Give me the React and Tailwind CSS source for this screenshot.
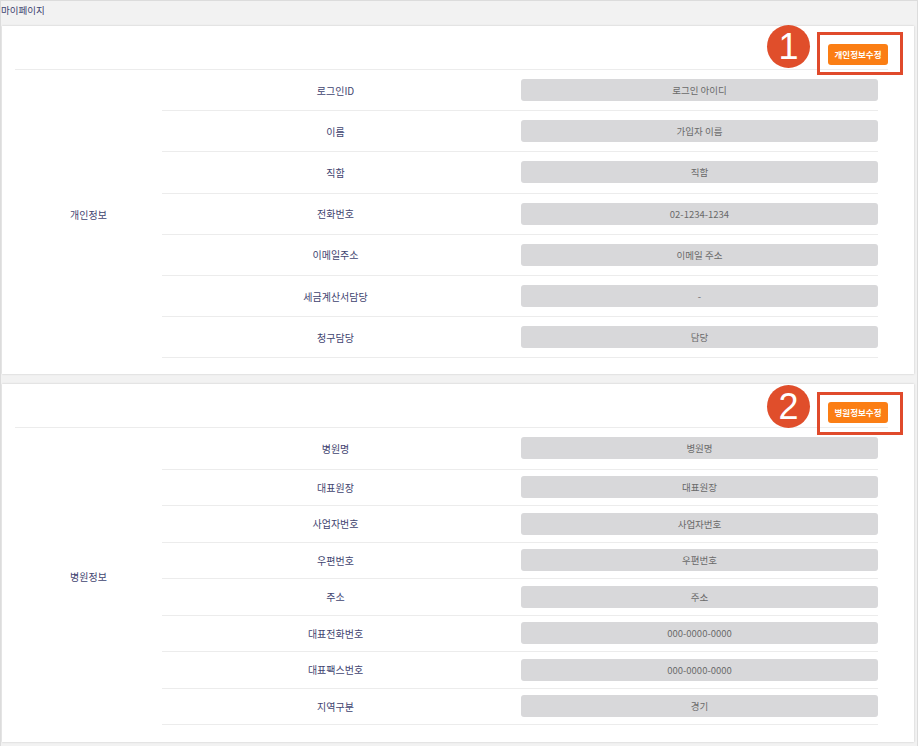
const font = { fontFamily: '"Noto Sans CJK KR", "Noto Sans", sans-serif' };

const personal = [
  ["로그인ID", "로그인 아이디"],
  ["이름", "가입자 이름"],
  ["직함", "직함"],
  ["전화번호", "02-1234-1234"],
  ["이메일주소", "이메일 주소"],
  ["세금계산서담당", "-"],
  ["청구담당", "담당"],
];

const hospital = [
  ["병원명", "병원명"],
  ["대표원장", "대표원장"],
  ["사업자번호", "사업자번호"],
  ["우편번호", "우편번호"],
  ["주소", "주소"],
  ["대표전화번호", "000-0000-0000"],
  ["대표팩스번호", "000-0000-0000"],
  ["지역구분", "경기"],
];

function Row({ label, value, tall }) {
  return (
    <div className={`flex items-center border-b border-[#ececec] ${tall ? "h-[41.2px]" : "h-[36.5px]"}`}>
      <div className="w-[347px] text-center text-[10px] text-[#3f4470]">{label}</div>
      <div className="flex-1 pl-[12px]">
        <div className="h-[22px] rounded-[3px] bg-[#d8d8da] flex items-center justify-center text-[9.5px] text-[#6a6a6a]">
          {value}
        </div>
      </div>
    </div>
  );
}

function Section({ title, button, num, rows, compact, className }) {
  return (
    <div className={`relative bg-white shadow-[0_0_2px_rgba(0,0,0,0.18)] ${className}`}>
      <div className="ml-[13px] mr-[26px] h-[44px] flex justify-end items-start pt-[18px] border-b border-[#ececec]">
        <button type="button" className="h-[21px] w-[60px] rounded-[3px] bg-[#fb7e14] text-white text-[8.5px] font-bold">
          {button}
        </button>
      </div>
      <div className="flex ml-[13px] mr-[36px]">
        <div className="w-[147px] flex items-center justify-center text-[10px] text-[#3f4470]">{title}</div>
        <div className="flex-1">
          {rows.map(([l, v], i) => (
            <Row key={l + i} label={l} value={v} tall={!compact || i === 0} />
          ))}
        </div>
      </div>
      <div className={`absolute left-[765px] ${compact ? "top-[1px]" : "top-[-1px]"} w-[43px] h-[43px] rounded-full bg-[#e04e2b] flex items-center justify-center text-white text-[36px] leading-none`} style={{ fontFamily: '"Liberation Sans", Arial, sans-serif' }}>
        {num}
      </div>
      <div className={`absolute left-[815px] ${compact ? "top-[8px]" : "top-[6px]"} w-[86px] h-[43px] border-[3px] border-[#e04a2b]`} />
    </div>
  );
}

export default function App() {
  return (
    <div className="w-[918px] h-[746px] overflow-hidden bg-[#f2f2f2] border-l border-t border-r border-[#dcdcdc]" style={font}>
      <div className="h-[25px] pt-[2px] text-[9.5px] leading-[14px] text-[#3d4470]">마이페이지</div>
      <div className="pl-[1px] pr-[3px] flex flex-col gap-[10px]">
        <Section title="개인정보" button="개인정보수정" num="1" rows={personal} className="pb-[16px]" />
        <Section title="병원정보" button="병원정보수정" num="2" rows={hospital} compact className="pb-[17px]" />
      </div>
    </div>
  );
}
